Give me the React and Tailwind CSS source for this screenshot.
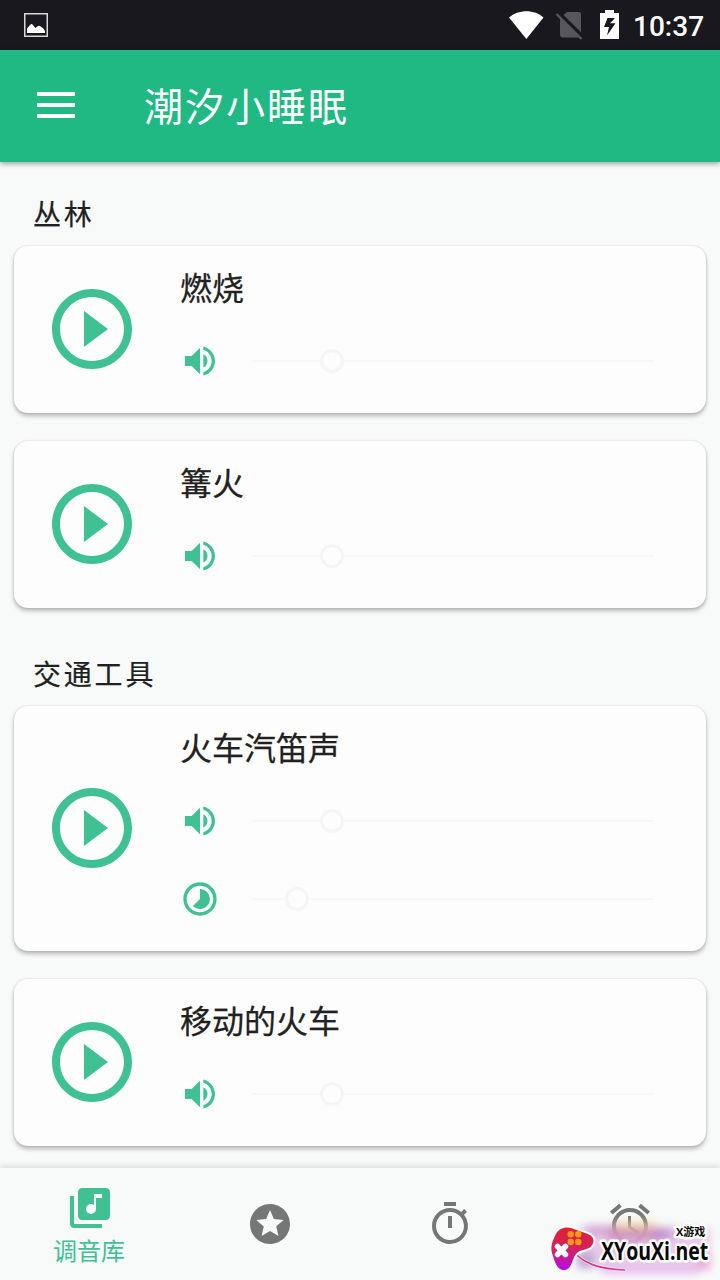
import {
  MdAlarm,
  MdLibraryMusic,
  MdOutlineTimer,
  MdPlayCircleOutline,
  MdStars,
  MdTimelapse,
  MdVolumeUp,
} from "react-icons/md";

const sections = [
  {
    title: "丛林",
    sounds: [
      { name: "燃烧", sliders: [{ type: "volume", value: 20 }] },
      { name: "篝火", sliders: [{ type: "volume", value: 20 }] },
    ],
  },
  {
    title: "交通工具",
    sounds: [
      {
        name: "火车汽笛声",
        sliders: [
          { type: "volume", value: 20 },
          { type: "interval", value: 11.3 },
        ],
      },
      { name: "移动的火车", sliders: [{ type: "volume", value: 20 }] },
    ],
  },
];

const StatusBar = () => {
  return (
    <div className="flex items-center h-[50px] bg-[#19181f] text-white">
      <svg className="ml-6 w-6 h-6" viewBox="0 0 24 24">
        <rect x="0.75" y="0.75" width="22.5" height="22.5" fill="none" stroke="#d8d8da" strokeWidth="1.5" />
        <path d="M3 20v-4.500l3.500-4q1-.8 2 0l3 3.500 2.500-2q1-.6 2 0l3.500 2.500 1.500 2.500v2z" fill="#fff" />
      </svg>
      <svg className="ml-auto w-[113px] h-[50px]" viewBox="0 0 113 50">
        <path d="M2 17.500C11 9 28 9 36.500 17.500L19.300 39z" fill="#fff" />
        <path d="M60 12h11.500a2.500 2.500 0 0 1 2.500 2.500v17.800L56.500 15zM53 18.500 72 37.500H56a3 3 0 0 1-3-3z" fill="#57565c" />
        <path d="M49.500 14 74.500 39" stroke="#57565c" strokeWidth="2.400" />
        <path
          fillRule="evenodd"
          d="M98 10h9v3h5v26H93V13h5zM100.500 18 97 27h5l-2 8.500 8.500-12.300h-5.500L108 18z"
          fill="#fff"
        />
      </svg>
      <span className="ml-[13px] mr-4 w-[71px] mt-[3px] font-[Roboto] font-medium text-[28px] leading-none whitespace-nowrap">
        10:37
      </span>
    </div>
  );
};

const AppBar = () => {
  return (
    <div className="relative z-10 flex items-center h-[112px] bg-[#20b883] shadow-[0_2px_5px_rgba(0,0,0,0.35)]">
      <div className="ml-[37px] mb-0.5 flex flex-col gap-[7px]">
        <span className="w-[38px] h-1 bg-white" />
        <span className="w-[38px] h-1 bg-white" />
        <span className="w-[38px] h-1 bg-white" />
      </div>
      <h1 className="ml-[69px] mb-1 text-[39px] leading-none tracking-[2px] text-white">
        潮汐小睡眠
      </h1>
    </div>
  );
};

const SliderRow = ({ type, value }) => {
  return (
    <div className="flex items-center h-[78px]">
      {type === "volume" ? (
        <MdVolumeUp className="w-10 h-10 text-[#3fc194]" />
      ) : (
        <MdTimelapse className="w-10 h-10 text-[#3fc194]" />
      )}
      <div className="ml-8 w-[402px] flex items-center">
        <div className="h-0.5 bg-[#f8f8f8]" style={{ width: `calc(${value}% - 12px)` }} />
        <div className="w-6 h-6 rounded-full border-[3px] border-[#f5f5f5]" />
        <div className="h-0.5 flex-1 bg-[#f8f8f8]" />
      </div>
    </div>
  );
};

const SoundCard = ({ name, sliders }) => {
  return (
    <div className="flex items-center mx-3.5 rounded-[14px] bg-[#fdfdfd] shadow-[0_3px_4px_rgba(0,0,0,0.26),0_0_2px_rgba(0,0,0,0.16)]">
      <MdPlayCircleOutline className="ml-[30px] mb-px w-24 h-24 text-[#3fc194]" />
      <div className="ml-10 pb-[13px]">
        <p className="h-[76px] pt-6 text-[32px] leading-8 text-[#212121] [-webkit-text-stroke:0.25px]">
          {name}
        </p>
        {sliders.map((slider) => (
          <SliderRow key={slider.type} {...slider} />
        ))}
      </div>
    </div>
  );
};

const BottomNav = () => {
  return (
    <div className="relative z-10 grid grid-cols-4 justify-items-center items-center h-[112px] bg-[#f8faf9] text-[#757776] shadow-[0_-2px_6px_rgba(0,0,0,0.13)]">
      <div className="flex flex-col items-center mb-0.5 text-[#3fc194]">
        <MdLibraryMusic className="w-12 h-12" />
        <span className="mt-1.5 mr-0.5 text-2xl leading-6">调音库</span>
      </div>
      <MdStars className="w-12 h-12" />
      <MdOutlineTimer className="w-12 h-12" />
      <MdAlarm className="w-12 h-12" />
    </div>
  );
};

const Watermark = () => {
  return (
    <svg className="absolute z-20 right-0 bottom-0 w-[180px] h-[90px]" viewBox="0 0 180 90">
      <defs>
        <filter id="haze" x="-20%" y="-40%" width="140%" height="180%">
          <feGaussianBlur stdDeviation="4.500" />
        </filter>
        <linearGradient id="pad" x1="0" y1="0" x2="0" y2="1">
          <stop offset="0" stopColor="#e02030" />
          <stop offset="0.5" stopColor="#d3225f" />
          <stop offset="1" stopColor="#b90bea" />
        </linearGradient>
      </defs>
      <g filter="url(#haze)">
        <rect x="36" y="38" width="134" height="40" fill="#e6c3e6" opacity="0.85" />
        <rect x="46" y="35" width="32" height="10" fill="#c98bcb" opacity="0.65" />
        <rect x="74" y="32" width="42" height="7" fill="#ecca92" opacity="0.75" />
        <rect x="68" y="39" width="56" height="12" fill="#c987b5" opacity="0.8" />
        <rect x="112" y="38" width="22" height="11" fill="#b883cf" opacity="0.7" />
        <rect x="38" y="62" width="16" height="16" fill="#9d8fc0" opacity="0.6" />
        <rect x="62" y="76" width="98" height="8" fill="#e2aff0" opacity="0.8" />
        <rect x="158" y="62" width="12" height="18" fill="#e993c7" opacity="0.6" />
      </g>
      <path d="M37 65C47 75 62 79 85 80" fill="none" stroke="#fff" strokeWidth="3" opacity="0.6" />
      <path d="M37 65C47 75 62 79 85 80" fill="none" stroke="#d63a86" strokeWidth="1.600" />
      <path
        d="M20 39.500C25 36.500 30 37 35 39.500L48 44c7 3 6.500 9 3 12.500C46 61 40 59 36 64c-4 5-4 15-11 16-8 1-10-8-13-17-1.500-6 0-11 2.500-16 1.500-3 2.500-6 5.500-7.500z"
        fill="url(#pad)"
        stroke="#fff"
        strokeWidth="4"
        paintOrder="stroke"
      />
      <g fill="#ff9b13">
        <circle cx="30.700" cy="44.300" r="3.200" />
        <circle cx="38.300" cy="44.300" r="3.200" />
        <circle cx="30.700" cy="52" r="3.200" />
        <circle cx="38.300" cy="52" r="3.200" />
      </g>
      <path d="M17.500 56.500 25.500 64.500M25.500 56.500 17.500 64.500" stroke="#fff" strokeWidth="5.500" strokeLinecap="round" />
      <g fill="#080808" stroke="#fff" strokeWidth="5" strokeLinejoin="round" paintOrder="stroke">
        <text
          x="136"
          y="46"
          className="font-['Open_Sans','Noto_Sans_CJK_SC',sans-serif] font-bold text-[11px]"
        >
          X游戏
        </text>
        <text
          transform="translate(61 70) scale(0.78 1)"
          className="font-['Open_Sans',sans-serif] font-bold text-[25px]"
        >
          XYouXi.net
        </text>
      </g>
    </svg>
  );
};

const App = () => {
  return (
    <div className="relative flex flex-col w-[720px] h-[1280px] overflow-hidden bg-[#f8faf9] font-['Noto_Sans_CJK_SC',sans-serif]">
      <StatusBar />
      <AppBar />
      <div className="flex-1 overflow-hidden">
        {sections.map((section) => (
          <div key={section.title} className="pb-3.5">
            <h2 className="h-[84px] pt-[37px] pl-[33px] text-[28px] leading-7 tracking-[2.8px] text-[#212121] [-webkit-text-stroke:0.2px]">
              {section.title}
            </h2>
            <div className="flex flex-col gap-7">
              {section.sounds.map((sound) => (
                <SoundCard key={sound.name} {...sound} />
              ))}
            </div>
          </div>
        ))}
      </div>
      <BottomNav />
      <Watermark />
    </div>
  );
};

export default App;
